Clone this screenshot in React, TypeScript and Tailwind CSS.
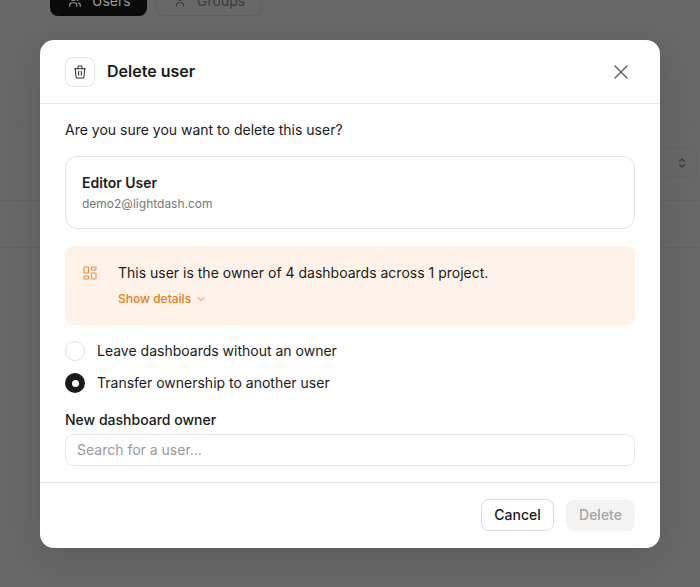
import { TbTrash, TbX, TbChevronDown, TbLayoutDashboard, TbUsers, TbUser, TbSelector } from "react-icons/tb";

export default function App() {
  return (
    <div className="relative h-[587px] w-[700px] overflow-hidden bg-[#686868] font-['Inter',sans-serif]">
      {/* Page behind the overlay */}
      <div className="flex flex-col">
        <div className="-mt-[16px] flex gap-[9px] pl-[50px]">
          <div className="flex h-[32px] w-[97px] items-center gap-[10px] rounded-lg bg-[#0a0a0a] pl-[18px] pt-[2px] text-sm text-[#999]">
            <TbUsers size={14} /> Users
          </div>
          <div className="flex h-[32px] w-[106px] items-center gap-[10px] rounded-lg border border-[#606060] pl-[16px] pt-[2px] text-sm text-[#3a3a3a]">
            <TbUser size={14} /> Groups
          </div>
        </div>
        <div className="h-[18px] border-b border-[#656565]" />
        <div className="h-[92px] border-b border-[#656565]" />
        <div className="flex h-[75px] justify-end border-b border-[#626262] pr-[3px] pt-[22px]">
          <div className="flex h-[29px] w-[60px] items-center justify-end rounded-md border border-[#636363] pr-[7px] text-[#333]">
            <TbSelector size={14} />
          </div>
        </div>
        <div className="h-[47px] border-b border-[#626262]" />
      </div>

      {/* Modal */}
      <div className="absolute left-[40px] top-[40px] flex w-[620px] flex-col rounded-[14px] bg-white text-[#1a1a1a] shadow-[0_10px_40px_rgba(0,0,0,0.12)]">
        <div className="flex h-[64px] items-center border-b border-[#e8e8e8] pl-[25px] pr-[27px]">
          <div className="flex h-[30px] w-[30px] items-center justify-center rounded-lg border border-[#e5e5e5]">
            <TbTrash size={16} strokeWidth={1.6} className="text-[#333]" />
          </div>
          <div className="ml-3 flex-1 -translate-y-px text-base font-semibold">Delete user</div>
          <TbX size={24} strokeWidth={1.25} className="text-[#555]" />
        </div>

        <div className="flex flex-col px-[25px] pt-[16px]">
          <p className="text-sm leading-[20px]">Are you sure you want to delete this user?</p>

          <div className="mt-4 flex h-[73px] flex-col justify-center rounded-xl border border-[#e0e0e0] px-4">
            <div className="text-sm font-semibold leading-5">Editor User</div>
            <div className="mt-[3px] text-xs leading-4 text-[#777]">demo2@lightdash.com</div>
          </div>

          <div className="mt-[17px] flex h-[79px] rounded-lg bg-[#fff3e9] pl-4 pt-[17px]">
            <TbLayoutDashboard size={18} strokeWidth={1.5} className="mt-px text-[#f08c3c]" />
            <div className="ml-[19px] flex flex-col">
              <div className="text-sm leading-5">This user is the owner of 4 dashboards across 1 project.</div>
              <div className="mt-[8px] flex items-center gap-1 text-xs leading-4 font-medium text-[#ea7a1e]">
                Show details <TbChevronDown size={12} />
              </div>
            </div>
          </div>

          <div className="mt-4 flex items-center gap-3">
            <span className="h-5 w-5 rounded-full border border-[#e0e0e0]" />
            <span className="text-sm leading-5">Leave dashboards without an owner</span>
          </div>
          <div className="mt-3 flex items-center gap-3">
            <span className="flex h-5 w-5 items-center justify-center rounded-full bg-[#1a1a1a]">
              <span className="h-[7px] w-[7px] rounded-full bg-white" />
            </span>
            <span className="text-sm leading-5">Transfer ownership to another user</span>
          </div>

          <div className="mt-[17px] text-sm leading-5 font-medium">New dashboard owner</div>
          <div className="mt-1 flex h-[32px] items-center rounded-lg border border-[#e8e8e8] px-[11px] text-sm text-[#999]">
            Search for a user...
          </div>
        </div>

        <div className="mt-4 mb-px flex h-[65px] items-center justify-end gap-3 border-t border-[#e8e8e8] pr-[25px]">
          <button className="h-[32px] w-[73px] rounded-lg border border-[#dcdcdc] bg-white text-sm font-medium">Cancel</button>
          <button className="h-[31px] w-[69px] rounded-lg bg-[#f3f3f3] text-sm font-medium text-[#a6a6a6]">Delete</button>
        </div>
      </div>
    </div>
  );
}
